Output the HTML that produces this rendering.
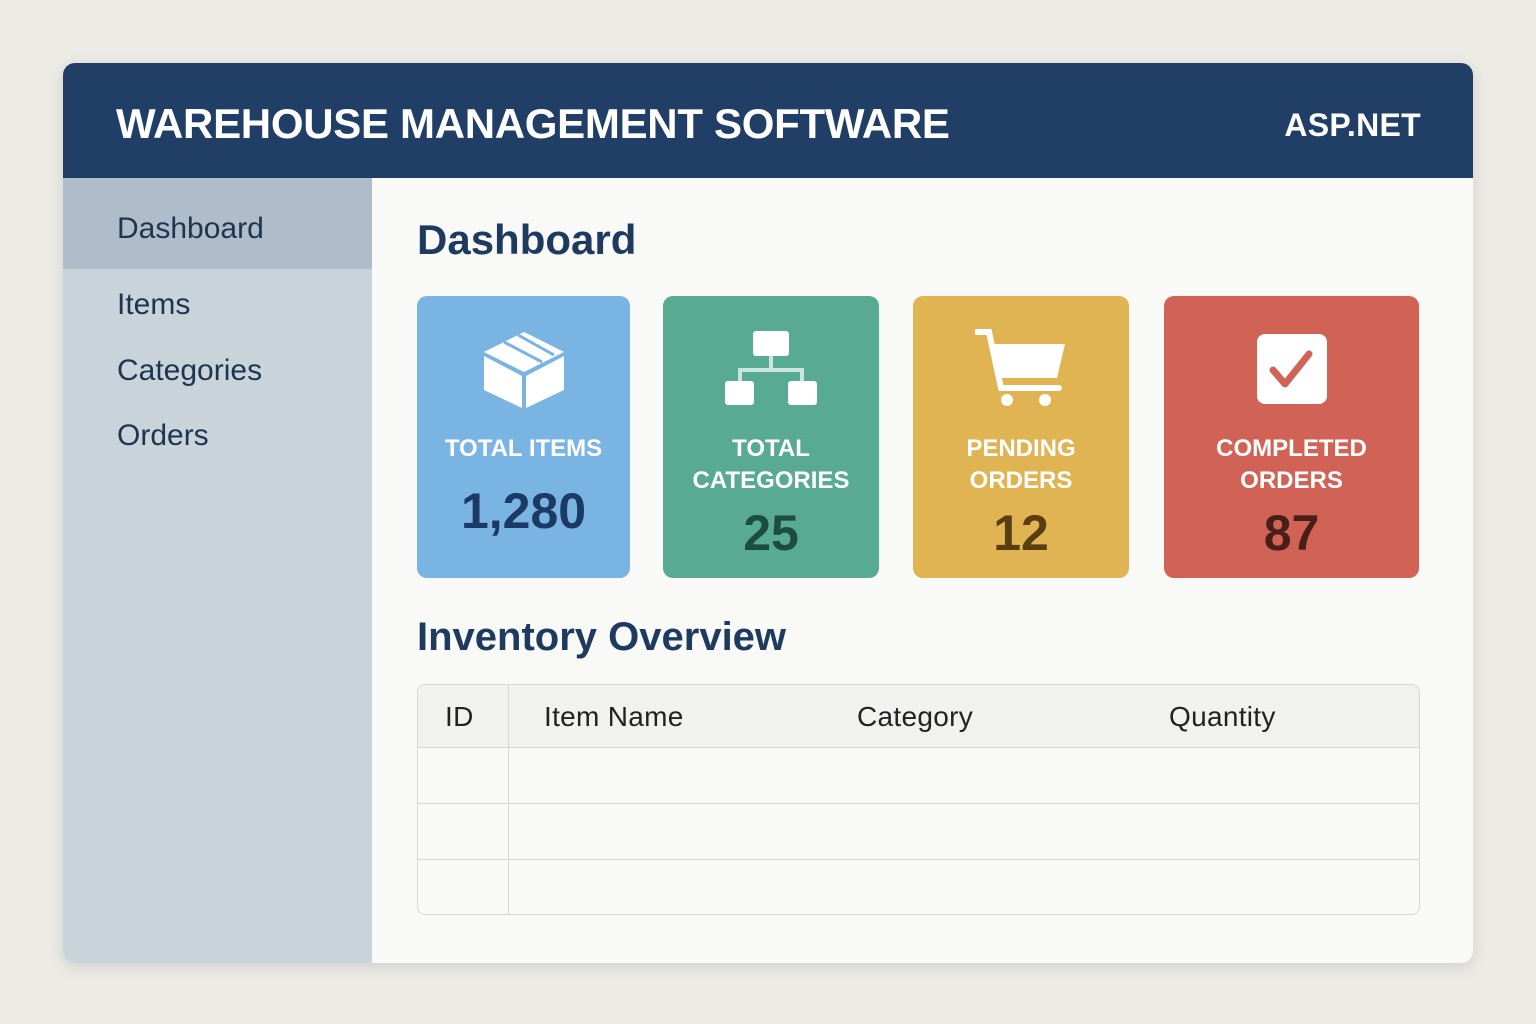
<!DOCTYPE html>
<html><head><meta charset="utf-8"><style>
*{margin:0;padding:0;box-sizing:border-box}
body{width:1536px;height:1024px;background:#edebe6;font-family:"Liberation Sans",sans-serif;position:relative;overflow:hidden}
.app{position:absolute;left:63px;top:63px;width:1410px;height:900px;border-radius:12px;overflow:hidden;background:#f9f9f8;box-shadow:0 4px 16px rgba(0,0,0,.12)}
.hdr{position:absolute;left:0;top:0;width:100%;height:115px;background:#213f66;color:#fff;font-weight:bold}
.hdr .t{position:absolute;left:53px;top:37px;font-size:42px;letter-spacing:-0.3px}
.hdr .a{position:absolute;right:52px;top:44px;font-size:32px;letter-spacing:0.3px}
.side{position:absolute;left:0;top:115px;width:309px;height:785px;background:#c8d3da}
.side div{position:absolute;left:54px;font-size:30px;color:#1e3550}
.side .act{left:0;top:0;width:309px;height:91px;background:#aebdc9}
.h{position:absolute;color:#1e3a5f;font-weight:bold;font-size:42px}
.c{position:absolute;top:233px;height:282px;border-radius:10px;color:#fff;text-align:center}
.c svg{position:absolute;left:50%;transform:translateX(-50%)}
.c .l{position:absolute;left:0;right:0;top:135px;font-size:24px;line-height:32px;font-weight:bold}
.c .n{position:absolute;left:0;right:0;font-size:50px;font-weight:bold}
.tbl{position:absolute;left:354px;top:621px;width:1003px;height:231px;border:1.5px solid #d6d6d6;border-radius:8px;overflow:hidden}
.tbl .hr{position:absolute;left:0;top:0;width:100%;height:63px;background:#f1f1f0;border-bottom:1.5px solid #d6d6d6}
.tbl .r{position:absolute;left:0;width:100%;border-top:1.5px solid #d6d6d6}
.tbl .v{position:absolute;left:90px;top:0;height:100%;border-left:1.5px solid #d6d6d6}
.tbl span{position:absolute;top:16px;font-size:28px;color:#222;letter-spacing:0.3px}
</style></head><body>
<div class="app">
<div class="hdr"><div class="t">WAREHOUSE MANAGEMENT SOFTWARE</div><div class="a">ASP.NET</div></div>
<div class="side">
<div class="act"></div>
<div style="top:34px">Dashboard</div>
<div style="top:110px">Items</div>
<div style="top:176px">Categories</div>
<div style="top:241px">Orders</div>
</div>
<div class="h" style="left:354px;top:153px">Dashboard</div>
<div class="c" style="left:354px;width:213px;background:#7ab4e2">
<svg width="84" height="80" style="top:34px" viewBox="0 0 84 80"><polygon points="2,22 42,2 82,22 42,42" fill="#fff"/><polygon points="2,26 40,46 40,78 2,60" fill="#fff"/><polygon points="44,46 82,26 82,60 44,78" fill="#fff"/><line x1="22" y1="12" x2="60" y2="32" stroke="#7ab4e2" stroke-width="3"/><line x1="36" y1="5" x2="72" y2="25" stroke="#7ab4e2" stroke-width="3"/></svg>
<div class="l" style="top:137px">TOTAL ITEMS</div><div class="n" style="top:186px;color:#1b3a66">1,280</div></div>
<div class="c" style="left:600px;width:216px;background:#58aa92">
<svg width="94" height="76" style="top:34px" viewBox="0 0 94 76"><rect x="29" y="1" width="36" height="25" rx="3" fill="#fff"/><path d="M47 26V40M16 54V40H78V54" stroke="#c9e5dc" stroke-width="4" fill="none"/><rect x="1" y="51" width="29" height="24" rx="3" fill="#fff"/><rect x="64" y="51" width="29" height="24" rx="3" fill="#fff"/></svg>
<div class="l" style="top:137px">TOTAL<br>CATEGORIES</div><div class="n" style="top:208px;color:#1c4d40">25</div></div>
<div class="c" style="left:850px;width:216px;background:#e0b452">
<svg width="92" height="80" style="top:32px" viewBox="0 0 92 80"><path d="M2 4H14L26 60H84" stroke="#fff" stroke-width="6" fill="none" stroke-linecap="round"/><polygon points="16,16 90,16 82,50 24,50" fill="#fff"/><circle cx="32" cy="72" r="6" fill="#fff"/><circle cx="70" cy="72" r="6" fill="#fff"/></svg>
<div class="l" style="top:137px">PENDING<br>ORDERS</div><div class="n" style="top:208px;color:#5a3e12">12</div></div>
<div class="c" style="left:1101px;width:255px;background:#d06355">
<svg width="70" height="70" style="top:38px" viewBox="0 0 70 70"><rect x="0" y="0" width="70" height="70" rx="8" fill="#fff"/><path d="M16 36L28 50L52 20" stroke="#d06355" stroke-width="7" fill="none" stroke-linecap="round" stroke-linejoin="round"/></svg>
<div class="l" style="top:137px">COMPLETED<br>ORDERS</div><div class="n" style="top:208px;color:#4a1f1a">87</div></div>
<div class="h" style="left:354px;top:552px;font-size:40px">Inventory Overview</div>
<div class="tbl">
<div class="hr"></div>
<div class="r" style="top:118px"></div>
<div class="r" style="top:174px"></div>
<div class="v"></div>
<span style="left:27px">ID</span><span style="left:126px">Item Name</span><span style="left:439px">Category</span><span style="left:751px">Quantity</span>
</div>
</div>
</body></html>
